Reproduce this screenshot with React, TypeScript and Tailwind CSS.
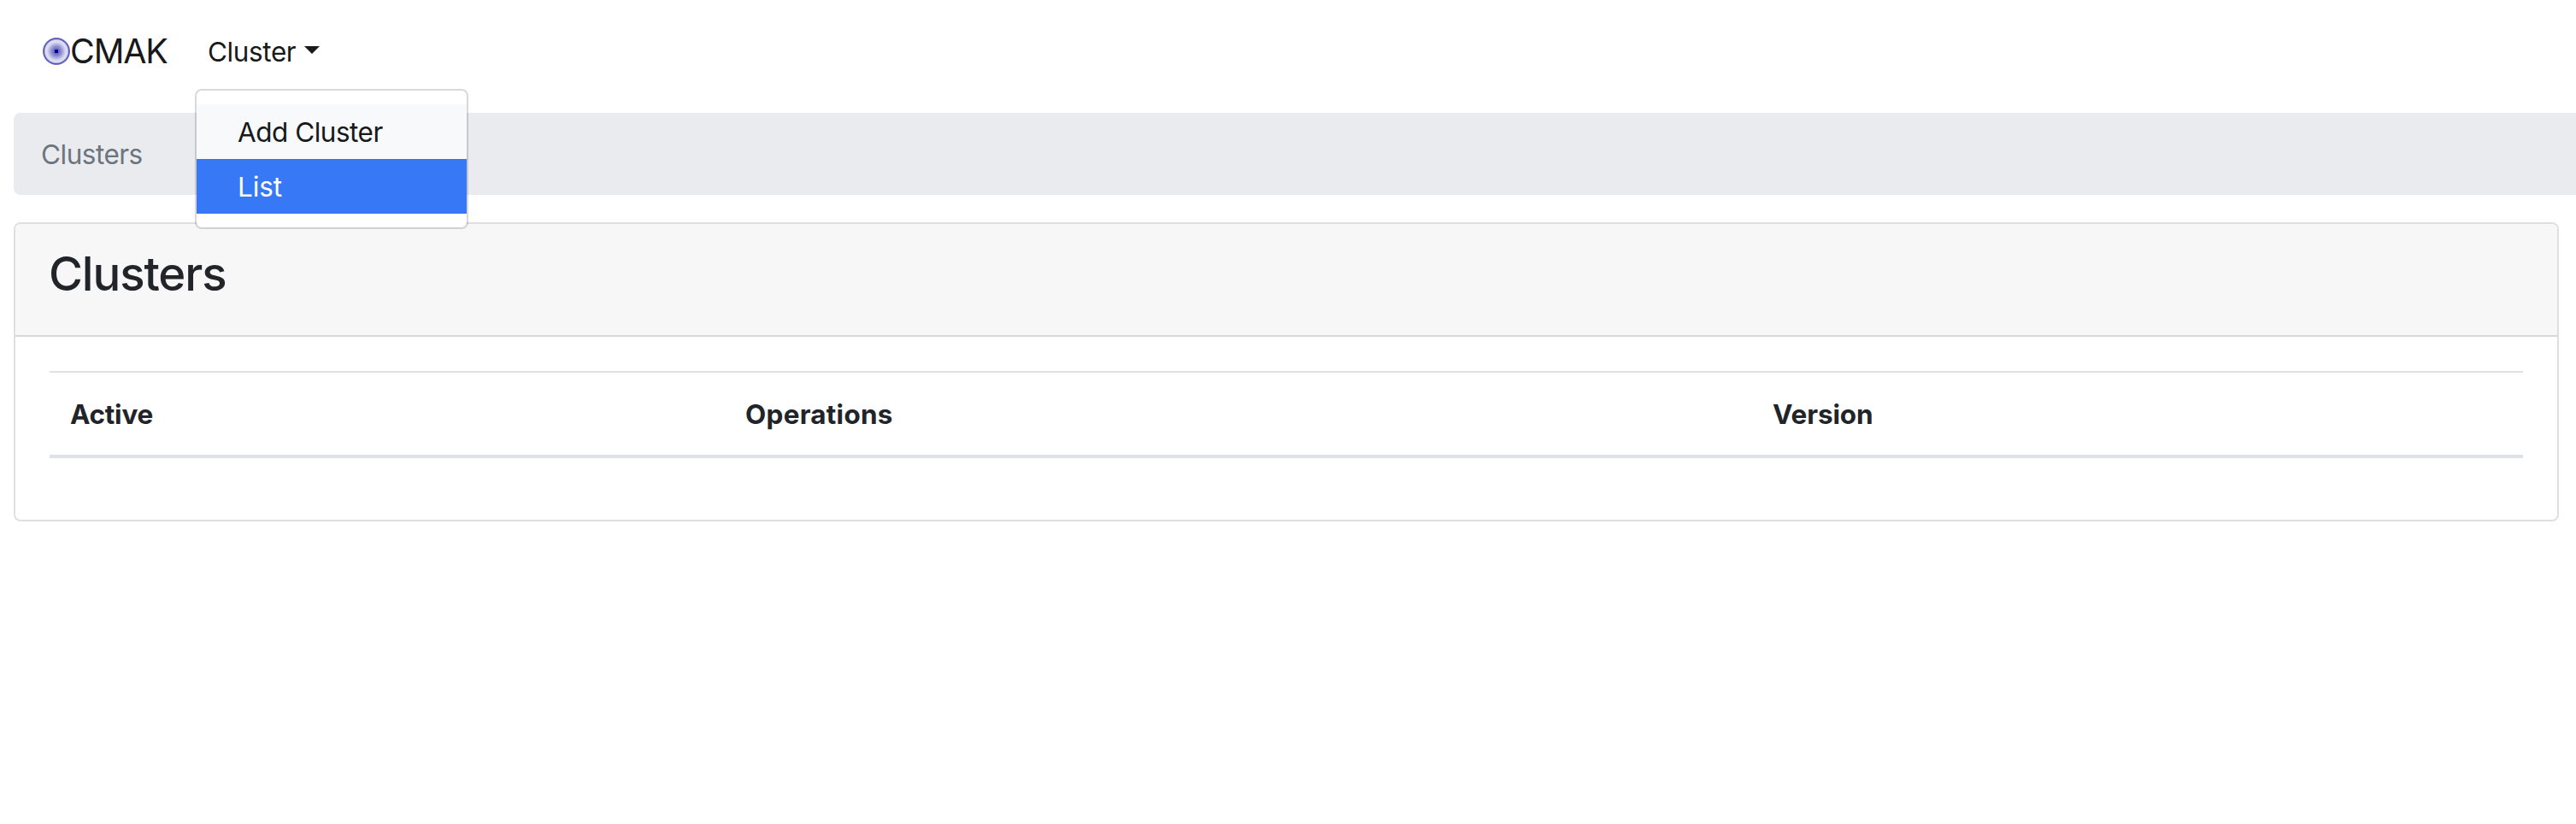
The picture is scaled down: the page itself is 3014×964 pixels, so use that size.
const columns = [
  { label: "Active", cell: "w-[790px] tracking-[-0.25px]" },
  { label: "Operations", cell: "w-[1202px] tracking-[0.25px]" },
  { label: "Version", cell: "tracking-[-0.1px]" },
];

function Logo() {
  return (
    <svg className="size-8 shrink-0" viewBox="0 0 32 32">
      <defs>
        <radialGradient id="glow" cx="0.5" cy="0.5" r="0.5">
          <stop offset="0" stopColor="#4a4ab4" />
          <stop offset="0.2" stopColor="#7070c4" />
          <stop offset="0.42" stopColor="#9c9cd6" />
          <stop offset="0.6" stopColor="#cacaea" />
          <stop offset="0.74" stopColor="#e2e2f4" />
          <stop offset="0.83" stopColor="#d0d0ec" />
          <stop offset="0.91" stopColor="#5454b8" />
          <stop offset="1" stopColor="#7c7cc8" />
        </radialGradient>
      </defs>
      <circle cx="16" cy="16" r="16" fill="url(#glow)" />
      <rect x="14" y="14" width="4" height="4" fill="#00009a" />
    </svg>
  );
}

function Navbar() {
  return (
    <nav className="flex h-[132px] items-start pt-[30px] pl-[50px] text-[#18191a]">
      <a className="flex h-[60px] items-center text-[39.5px] leading-[60px]">
        <Logo />
        <span className="w-[130px] tracking-[-1.2px]">CMAK</span>
      </a>
      <div className="relative ml-[31px] flex h-[60px] items-center">
        <span className="w-[104px] pt-[2px] tracking-[-0.4px]">Cluster</span>
        <span className="mb-[3px] ml-[9px] border-x-[9px] border-t-[9px] border-x-transparent border-t-[#18191a]" />
        <div className="absolute top-[74px] left-[-15px] z-10 w-[320px] rounded-lg border-2 border-black/15 bg-white bg-clip-padding py-4">
          <a className="block h-16 bg-[#f8f9fa] pt-[9px] pl-12 tracking-[-0.5px] text-[#16181b]">Add Cluster</a>
          <a className="block h-16 bg-[#3778f7] pt-[9px] pl-12 tracking-[-0.1px] text-white">List</a>
        </div>
      </div>
    </nav>
  );
}

export default function App() {
  return (
    <div className="min-h-screen overflow-hidden bg-white font-['Inter','Liberation_Sans',sans-serif] text-[31.5px] leading-[48px] font-normal text-[#212529]">
      <Navbar />
      <div className="ml-4 h-24 rounded-l-lg bg-[#eaebef] pt-[25px] pl-8 tracking-[-0.5px] text-[#6c757d]">Clusters</div>
      <section className="mt-8 mr-5 ml-4 h-[350px] rounded-lg border-2 border-[#dfdfdf] bg-white">
        <header className="h-[132px] rounded-t-md border-b-2 border-[#d8d8d8] bg-[#f7f7f7] pt-[25px] pl-[39px]">
          <h1 className="text-[54.5px] leading-[67px] font-medium tracking-[-1.1px]">Clusters</h1>
        </header>
        <div className="p-10">
          <table className="w-full table-fixed border-collapse">
            <thead>
              <tr className="border-t-2 border-b-4 border-[#dee2e6]">
                {columns.map((c) => (
                  <th key={c.label} className={`${c.cell} px-6 pt-[25px] pb-[23px] text-left font-bold`}>
                    {c.label}
                  </th>
                ))}
              </tr>
            </thead>
          </table>
        </div>
      </section>
    </div>
  );
}
